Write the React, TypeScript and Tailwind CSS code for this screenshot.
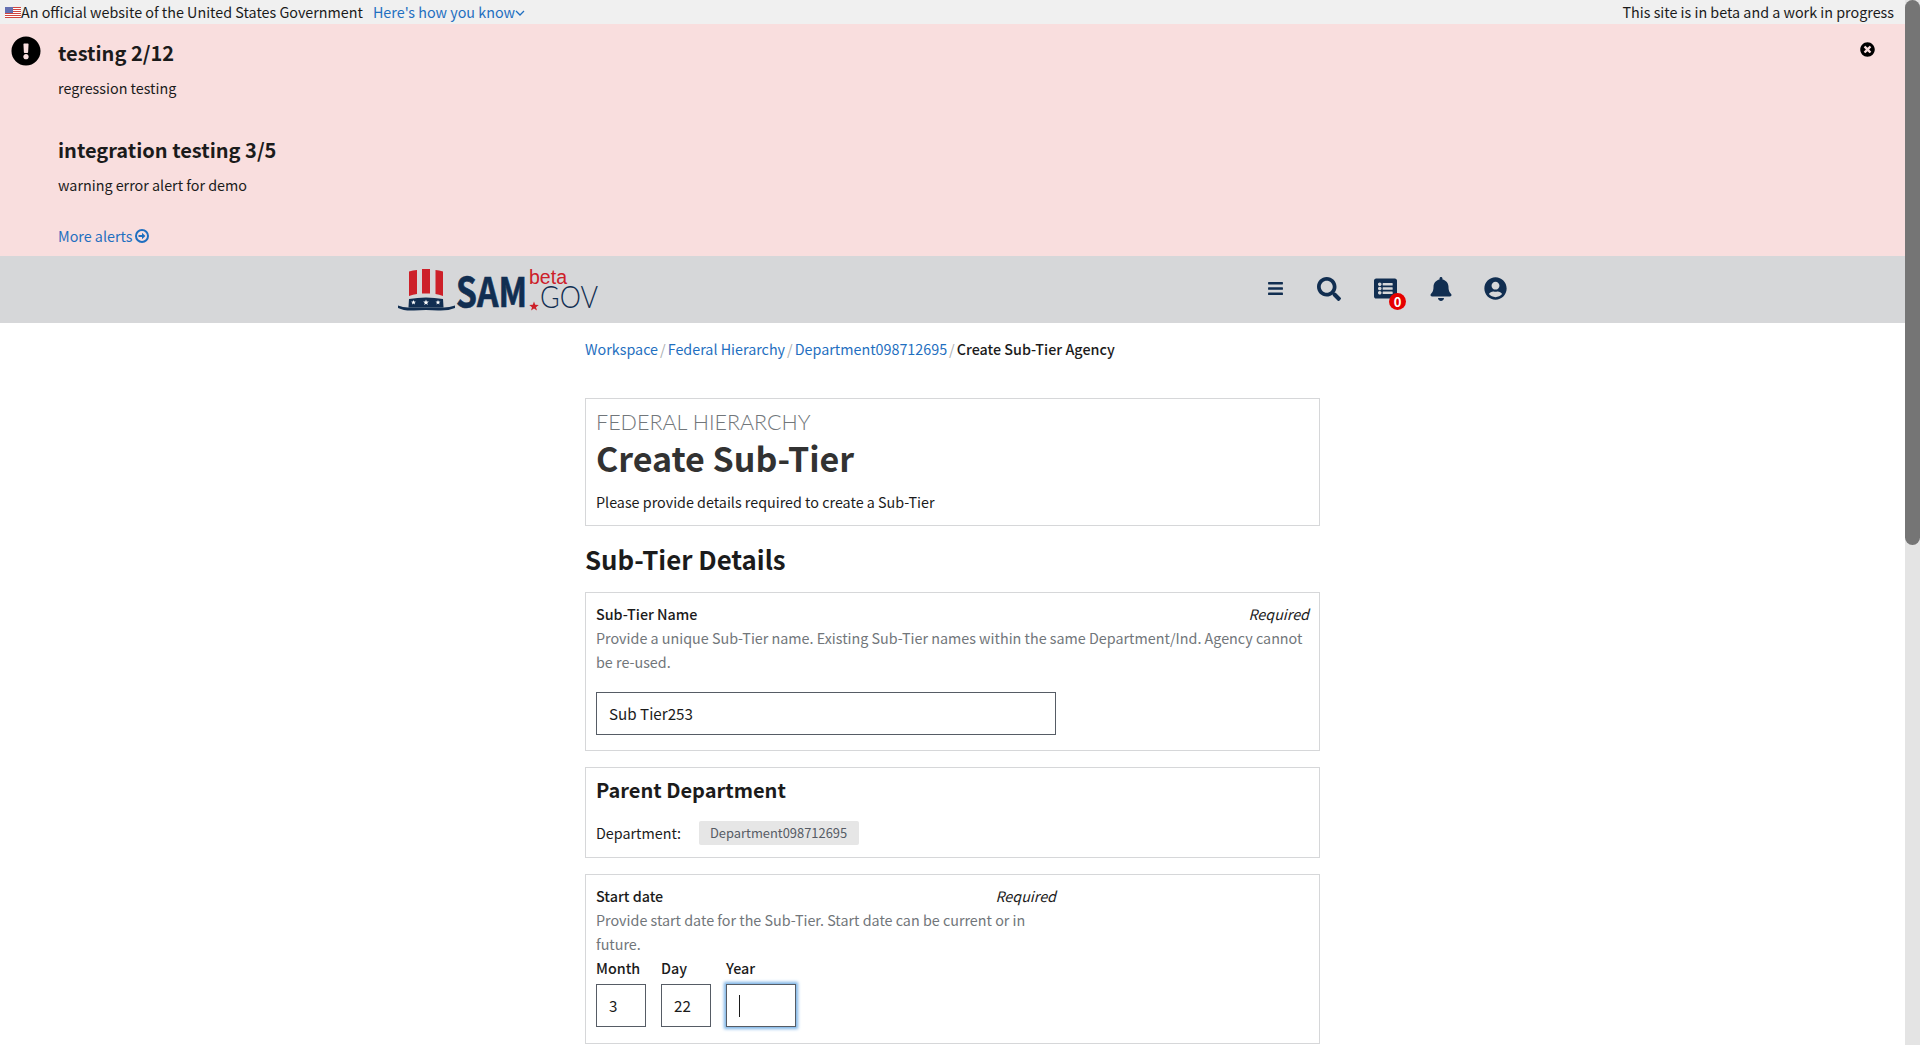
import React from "react";
import { FaBars, FaSearch, FaListAlt, FaBell, FaUserCircle, FaExclamationCircle, FaTimesCircle } from "react-icons/fa";

const Flag = () => (
  <svg width="16" height="11" viewBox="0 0 16 11" className="shrink-0">
    <rect width="16" height="11" fill="#fff" />
    {[0, 2, 4, 6, 8, 10].map((y) => (
      <rect key={y} y={y} width="16" height="1" fill="#d0453f" />
    ))}
    <rect width="8" height="6" fill="#3b4a9a" />
    {[1, 3, 5].map((y) => [1, 3, 5, 7].map((x) => <rect key={`${x}-${y}`} x={x - 0.5} y={y - 0.5} width="1" height="1" fill="#dfe3f5" />))}
  </svg>
);

const star = (cx: number, cy: number, r: number) => {
  const pts: string[] = [];
  for (let i = 0; i < 10; i++) {
    const a = -Math.PI / 2 + (i * Math.PI) / 5;
    const rr = i % 2 === 0 ? r : r * 0.42;
    pts.push(`${cx + rr * Math.cos(a)},${cy + rr * Math.sin(a)}`);
  }
  return pts.join(" ");
};

const Logo = () => (
  <svg width="206" height="48" viewBox="0 0 206 48" className="block overflow-visible">
    <path d="M11 5.5 Q15 4 19 4 L19 28 Q15 28.5 11 30 Z" fill="#cd2029" />
    <rect x="24" y="3" width="8" height="24.5" fill="#cd2029" />
    <path d="M37.5 4 Q41 4 45 5.5 L45 30 Q41 28.5 37.5 28 Z" fill="#cd2029" />
    <path d="M11 33 Q28 30 45 33 L45.5 41.5 L10.5 41.5 Z" fill="#112e51" />
    <path d="M0 39.5 Q6 42 12 41.5 H44 Q50 42 57 39.5 V42 Q50 45 40 44.5 Q28 43.5 16 44.5 Q6 45 0 42 Z" fill="#112e51" />
    <polygon points={star(15.5, 36.5, 2.6)} fill="#fff" />
    <polygon points={star(28, 36.5, 3)} fill="#fff" />
    <polygon points={star(40, 36.5, 2.6)} fill="#fff" />
    <text x="58" y="41" fontFamily="'Noto Sans CJK SC', sans-serif" fontWeight="700" fontSize="40" fill="#112e51" stroke="#112e51" strokeWidth="0.7" textLength="71" lengthAdjust="spacingAndGlyphs">SAM</text>
    <text x="131" y="18" fontFamily="'Liberation Sans', sans-serif" fontSize="20" fill="#cd2029" textLength="38" lengthAdjust="spacingAndGlyphs">beta</text>
    <text x="142" y="41.5" fontFamily="Lato, sans-serif" fontWeight="300" fontSize="31" fill="#112e51" textLength="58" lengthAdjust="spacingAndGlyphs">GOV</text>
    <polygon points={star(136, 40.5, 5)} fill="#cd2029" />
  </svg>
);

const Card = ({ className = "", children }: { className?: string; children: React.ReactNode }) => (
  <section className={`border border-[#d6d7d9] px-[10px] ${className}`}>{children}</section>
);

export default function App() {
  return (
    <div className="relative h-screen overflow-hidden bg-white text-[14.34px] leading-[24px] text-[#1b1b1b] font-['Noto_Sans_CJK_SC','Noto_Sans',sans-serif]">
      <div className="flex h-[24px] items-center justify-between bg-[#f0f0f0] pl-[5px] pr-[26px]">
        <div className="flex items-center">
          <Flag />
          <span>An official website of the United States Government</span>
          <span className="ml-[10px] text-[#1f6fc0]">Here's how you know</span>
          <svg width="10" height="6" viewBox="0 0 10 6" className="mt-[2px]">
            <path d="M1 1 L5 5 L9 1" fill="none" stroke="#1f6fc0" strokeWidth="1.3" />
          </svg>
        </div>
        <span>This site is in beta and a work in progress</span>
      </div>

      <div className="relative h-[232px] bg-[#f9dede] pl-[58px]">
        <FaExclamationCircle size={30} className="absolute left-[11px] top-[12px] text-black" />
        <FaTimesCircle size={15} className="absolute left-[1860px] top-[18px] text-black" />
        <h2 className="pt-[15px] text-[20px] font-bold leading-[28px]">testing 2/12</h2>
        <p className="mt-[9px]">regression testing</p>
        <h2 className="mt-[36px] text-[20px] font-bold leading-[28px]">integration testing 3/5</h2>
        <p className="mt-[9px]">warning error alert for demo</p>
        <a className="mt-[27px] flex items-center text-[#1f6fc0]">
          More alerts
          <svg width="14" height="14" viewBox="0 0 14 14" className="ml-[3px]">
            <circle cx="7" cy="7" r="6" fill="none" stroke="#1f6fc0" strokeWidth="2" />
            <path d="M3.5 6 H7 V3.8 L10.4 7 L7 10.2 V8 H3.5 Z" fill="#1f6fc0" />
          </svg>
        </a>
      </div>

      <header className="flex h-[67px] items-center justify-between bg-[#d6d7d9] pl-[398px] pr-[413px] text-[#112e51]">
        <Logo />
        <div className="flex items-center pb-[2px]">
          <FaBars size={17} />
          <FaSearch size={24} className="ml-[33px]" />
          <div className="relative ml-[33px]">
            <FaListAlt size={23} />
            <span className="absolute left-[15px] top-[16px] flex h-[17px] w-[17px] items-center justify-center rounded-full bg-[#e60000] text-[13px] font-bold leading-none text-white">0</span>
          </div>
          <FaBell size={24} className="ml-[31.5px]" />
          <FaUserCircle size={23} className="ml-[31.5px]" />
        </div>
      </header>

      <main className="ml-[585px] w-[735px]">
        <nav className="flex h-[53px] items-center pb-[1px] text-[#1f6fc0]">
          <a>Workspace</a>
          <span className="mx-[2px] text-[#a9aeb1]">/</span>
          <a>Federal Hierarchy</a>
          <span className="mx-[2px] text-[#a9aeb1]">/</span>
          <a>Department098712695</a>
          <span className="mx-[2px] text-[#a9aeb1]">/</span>
          <span className="font-medium text-[#1b1b1b]">Create Sub-Tier Agency</span>
        </nav>

        <div className="mt-[22px]">
          <Card className="h-[128px]">
            <p className="pt-[9px] font-['Lato',sans-serif] text-[21.5px] font-light leading-[28px] text-[#71767a]">FEDERAL HIERARCHY</p>
            <h1 className="text-[34px] font-bold leading-[44px] text-[#323232]">Create Sub-Tier</h1>
            <p className="mt-[10px]">Please provide details required to create a Sub-Tier</p>
          </Card>
        </div>

        <h2 className="mt-[15px] text-[25.8px] font-bold leading-[36px]">Sub-Tier Details</h2>

        <Card className="mt-[15px] h-[159px]">
          <div className="flex justify-between pt-[9px]">
            <span className="font-medium">Sub-Tier Name</span>
            <span className="italic">Required</span>
          </div>
          <p className="text-[#71767a]">Provide a unique Sub-Tier name. Existing Sub-Tier names within the same Department/Ind. Agency cannot be re-used.</p>
          <input readOnly value="Sub Tier253" className="mt-[18px] block h-[43px] w-[460px] border border-[#565c65] px-[12px] pb-[2px] text-[15.2px] outline-none" />
        </Card>

        <Card className="mt-[16px] h-[91px]">
          <h3 className="pt-[8px] text-[20px] font-bold leading-[28px]">Parent Department</h3>
          <div className="mt-[17px] flex items-center">
            <span className="w-[103px]">Department:</span>
            <span className="flex h-[24px] items-center rounded-[2px] bg-[#e6e6e6] pl-[11px] pr-[12px] text-[12.9px] text-[#565c65]">Department098712695</span>
          </div>
        </Card>

        <Card className="mt-[16px] h-[170px]">
          <div className="w-[460px]">
            <div className="flex justify-between pt-[9px]">
              <span className="font-medium">Start date</span>
              <span className="italic">Required</span>
            </div>
            <p className="text-[#71767a]">Provide start date for the Sub-Tier. Start date can be current or in future.</p>
            <div className="flex gap-[15px] font-medium">
              <label className="block w-[50px]">
                Month
                <input readOnly value="3" className="mt-[4px] block h-[43px] w-[50px] border border-[#565c65] px-[12px] pb-[2px] text-[15.2px] font-normal outline-none" />
              </label>
              <label className="block w-[50px]">
                Day
                <input readOnly value="22" className="mt-[4px] block h-[43px] w-[50px] border border-[#565c65] px-[12px] pb-[2px] text-[15.2px] font-normal outline-none" />
              </label>
              <label className="block w-[70px]">
                Year
                <div className="mt-[4px] flex h-[43px] w-[70px] items-center border border-[#565c65] pl-[12px] shadow-[0_0_3px_2px_#7db4e6]">
                  <span className="h-[22px] w-px bg-[#1b1b1b]" />
                </div>
              </label>
            </div>
          </div>
        </Card>
      </main>

      <div className="absolute right-0 top-0 h-full w-[15px] bg-[#e4e4e4]">
        <div className="h-[545px] rounded-full bg-[#757575]" />
      </div>
    </div>
  );
}
